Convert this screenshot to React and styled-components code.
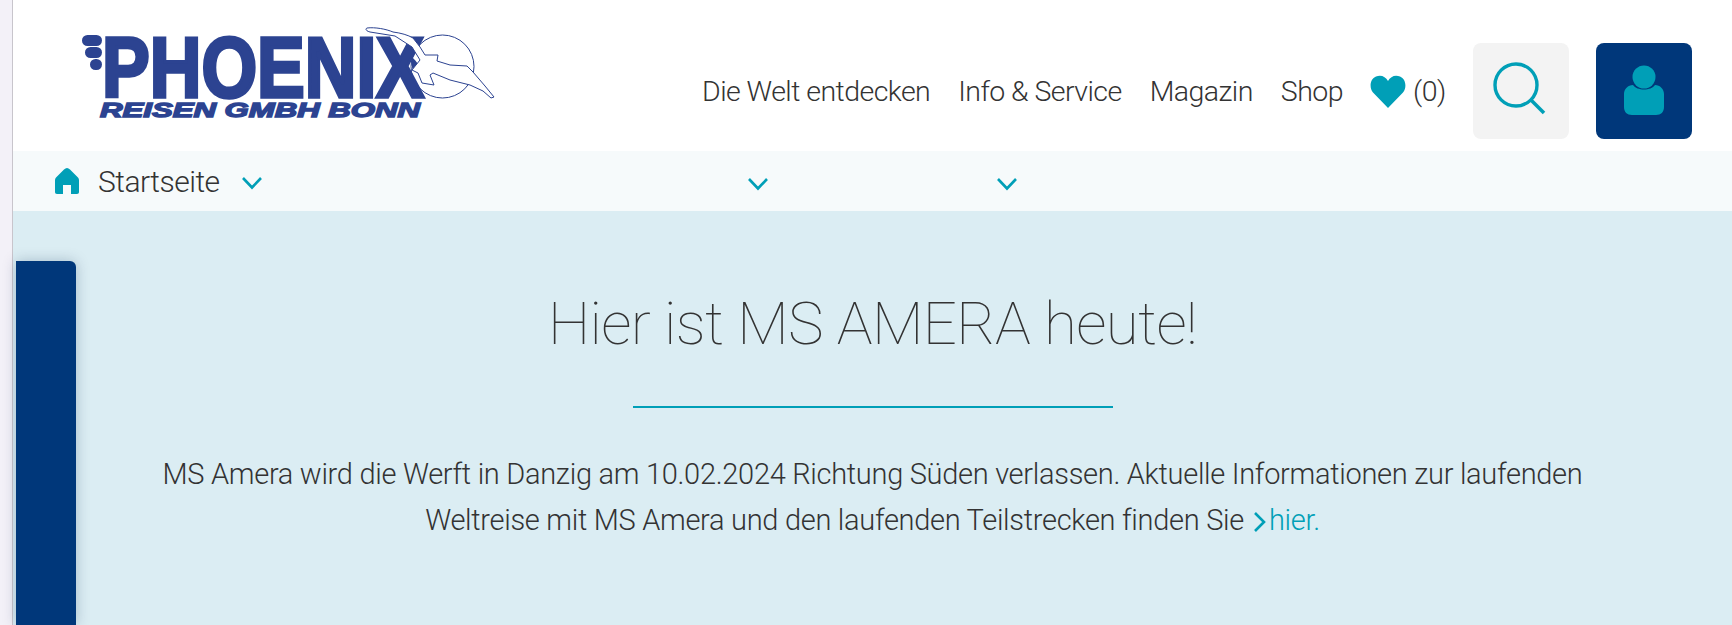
import React from 'react'
import styled, { createGlobalStyle } from 'styled-components'

const teal = '#009fb7'
const navy = '#00377a'
const logoBlue = '#2c4391'

const GlobalStyle = createGlobalStyle`
  html, body {
    margin: 0;
    padding: 0;
    height: 100%;
    overflow: hidden;
    background: #fff;
  }
  #root {
    height: 100%;
  }
`

const Shell = styled.div`
  display: flex;
  height: 100vh;
  font-family: "Roboto", "Open Sans", sans-serif;
  color: #333;
`

const SideStrip = styled.div`
  width: 12px;
  flex: none;
  background: #f3f1f8;
  border-right: 1px solid #c8c5cc;
`

const Page = styled.div`
  flex: 1;
  min-width: 0;
  display: flex;
  flex-direction: column;
`

const Header = styled.header`
  height: 151px;
  flex: none;
  display: flex;
  align-items: flex-start;
  justify-content: space-between;
  padding: 0 40px 0 67px;
`

const Logo = styled.svg`
  width: 420px;
  height: 110px;
  margin-top: 20px;
  flex: none;
`

const HeaderRight = styled.div`
  display: flex;
  align-items: flex-start;
  padding-top: 43px;
`

const NavLink = styled.a`
  font-size: 28.5px;
  font-weight: 300;
  line-height: 40px;
  letter-spacing: -0.55px;
  margin-top: 29px;
  margin-right: ${p => p.$gap}px;
  white-space: nowrap;
  color: #333;
`

const Wishlist = styled.div`
  display: flex;
  align-items: center;
  gap: 7px;
  margin-top: 29px;
  margin-right: 27px;
  font-size: 28.5px;
  font-weight: 300;
  line-height: 40px;
  letter-spacing: -0.4px;
`

const SquareButton = styled.button`
  width: 96px;
  height: 96px;
  padding: 0;
  border: 0;
  border-radius: 8px;
  display: flex;
  align-items: center;
  justify-content: center;
  background: ${p => (p.$dark ? navy : '#f3f3f3')};
  margin-left: ${p => (p.$dark ? 27 : 0)}px;
`

const SubNav = styled.nav`
  height: 60px;
  flex: none;
  display: flex;
  align-items: flex-start;
  background: #f6fafb;
  padding-left: 42px;
`

const Crumb = styled.div`
  display: flex;
  align-items: center;
  height: 60px;
  font-size: 30px;
  font-weight: 300;
  letter-spacing: -0.5px;
`

const CrumbLabel = styled.span`
  margin: 0 21px 0 19px;
`

const SubChevron = styled.svg`
  width: 22px;
  height: 14px;
  flex: none;
  margin-top: ${p => p.$top}px;
  margin-left: ${p => p.$left}px;
`

const Main = styled.main`
  position: relative;
  flex: 1;
  background: #dbedf3;
  display: flex;
  flex-direction: column;
  align-items: center;
  padding-top: 77px;
`

const SideTab = styled.div`
  position: absolute;
  left: 3px;
  top: 50px;
  bottom: 0;
  width: 60px;
  background: ${navy};
  border-radius: 0 6px 0 0;
  box-shadow: 0 0 14px rgba(0, 40, 80, 0.25);
`

const Title = styled.h1`
  margin: 0;
  font-size: 60px;
  line-height: 72px;
  font-weight: 100;
  letter-spacing: -0.6px;
  color: #333;
`

const Rule = styled.div`
  width: 480px;
  height: 2px;
  background: ${teal};
  margin-top: 46px;
`

const Lead = styled.p`
  margin: 43px 0 0;
  width: 1600px;
  text-align: center;
  font-size: 29px;
  line-height: 46px;
  font-weight: 300;
  letter-spacing: -0.3px;
  color: #333;
`

const MoreLink = styled.a`
  color: ${teal};
  white-space: nowrap;
  margin-left: 9px;
`

const MoreArrow = styled.svg`
  width: 13px;
  height: 22px;
  margin-right: 3px;
  vertical-align: -3px;
`

const Chevron = ({ top, left }) => (
  <SubChevron $top={top} $left={left} viewBox="0 0 22 14">
    <polyline points="2,2 11,11.5 20,2" fill="none" stroke={teal} strokeWidth="2.6" />
  </SubChevron>
)

const PhoenixLogo = () => (
  <Logo viewBox="80 20 420 110">
    <rect x="82" y="35" width="20" height="11" rx="5.5" fill={logoBlue} />
    <rect x="85" y="47" width="17" height="11" rx="5.5" fill={logoBlue} />
    <rect x="90" y="59" width="12" height="11" rx="5.5" fill={logoBlue} />
    <text
      x="102"
      y="97"
      textLength="322"
      lengthAdjust="spacingAndGlyphs"
      fontFamily="Liberation Sans"
      fontWeight="700"
      fontSize="85"
      fill={logoBlue}
      stroke={logoBlue}
      strokeWidth="3.5"
    >
      PHOENIX
    </text>
    <text
      x="100"
      y="117"
      textLength="320"
      lengthAdjust="spacingAndGlyphs"
      fontFamily="Liberation Sans"
      fontWeight="700"
      fontStyle="italic"
      fontSize="21"
      fill={logoBlue}
      stroke={logoBlue}
      strokeWidth="1.4"
    >
      REISEN GMBH BONN
    </text>
    <circle cx="442.5" cy="66.5" r="31.5" fill="none" stroke={logoBlue} strokeWidth="1" />
    <path
      d="M412 57 C 417 62 420 66 421 70 L 413 70 C 411 66 411 60 412 57 Z"
      fill={logoBlue}
    />
    <path
      d="M367 28 C 375 27 386 29 393 32 C 401 33 408 35 413 38 L 420 47 L 425 55 L 438 55 L 437 61 L 450 65 L 467 66 L 473 72 L 485 86 L 494 97 L 491 98 L 483 91 L 470 85 L 450 80 L 433 73 L 430 75 L 434 85 L 422 83 L 418 73 L 412 70 L 420 60 L 412 47 L 395 36 L 370 32 C 366 31 365 29 367 28 Z"
      fill="#fff"
      stroke={logoBlue}
      strokeWidth="1"
      strokeLinejoin="round"
    />
  </Logo>
)

export default function App() {
  return (
    <>
      <GlobalStyle />
      <Shell>
        <SideStrip />
        <Page>
          <Header>
            <PhoenixLogo />
            <HeaderRight>
              <NavLink $gap={28}>Die Welt entdecken</NavLink>
              <NavLink $gap={28}>Info &amp; Service</NavLink>
              <NavLink $gap={28}>Magazin</NavLink>
              <NavLink $gap={27}>Shop</NavLink>
              <Wishlist>
                <svg width="36" height="34" viewBox="0 0 36 34">
                  <path
                    d="M18 33 L3 17.5 C-1 12.5 0 4 6 1.5 C11 -0.5 15.5 1.5 18 6 C20.5 1.5 25 -0.5 30 1.5 C36 4 37 12.5 33 17.5 Z"
                    fill={teal}
                  />
                </svg>
                <span>(0)</span>
              </Wishlist>
              <SquareButton>
                <svg width="60" height="60" viewBox="0 0 60 60">
                  <circle cx="25" cy="24" r="21" fill="none" stroke={teal} strokeWidth="3.4" />
                  <line x1="40" y1="39" x2="53" y2="52" stroke={teal} strokeWidth="3.6" />
                </svg>
              </SquareButton>
              <SquareButton $dark>
                <svg width="44" height="52" viewBox="0 0 44 52">
                  <path
                    d="M11 20 C 15 26 29 26 33 20 C 38 20 42 24 42 29 L 42 42 C 42 47 39 50 34 50 L 10 50 C 5 50 2 47 2 42 L 2 29 C 2 24 6 20 11 20 Z"
                    fill={teal}
                  />
                  <circle cx="22" cy="12" r="11.5" fill={teal} />
                </svg>
              </SquareButton>
            </HeaderRight>
          </Header>
          <SubNav>
            <Crumb>
              <svg width="24" height="26" viewBox="0 0 24 26">
                <path
                  d="M12 0 C 13 0 14 .5 15 1.5 L 22.5 9 C 23.5 10 24 11 24 12.5 L 24 24 C 24 25.3 23.3 26 22 26 L 16 26 L 16 17 L 8 17 L 8 26 L 2 26 C .7 26 0 25.3 0 24 L 0 12.5 C 0 11 .5 10 1.5 9 L 9 1.5 C 10 .5 11 0 12 0 Z"
                  fill={teal}
                />
              </svg>
              <CrumbLabel>Startseite</CrumbLabel>
              <Chevron top={3} left={0} />
            </Crumb>
            <Chevron top={26} left={484} />
            <Chevron top={26} left={227} />
          </SubNav>
          <Main>
            <SideTab />
            <Title>Hier ist MS AMERA heute!</Title>
            <Rule />
            <Lead>
              MS Amera wird die Werft in Danzig am 10.02.2024 Richtung Süden verlassen. Aktuelle Informationen zur laufenden
              <br />
              Weltreise mit MS Amera und den laufenden Teilstrecken finden Sie
              <MoreLink>
                <MoreArrow viewBox="0 0 13 22">
                  <polyline points="2,2 11,11 2,20" fill="none" stroke={teal} strokeWidth="2.6" />
                </MoreArrow>
                hier.
              </MoreLink>
            </Lead>
          </Main>
        </Page>
      </Shell>
    </>
  )
}
